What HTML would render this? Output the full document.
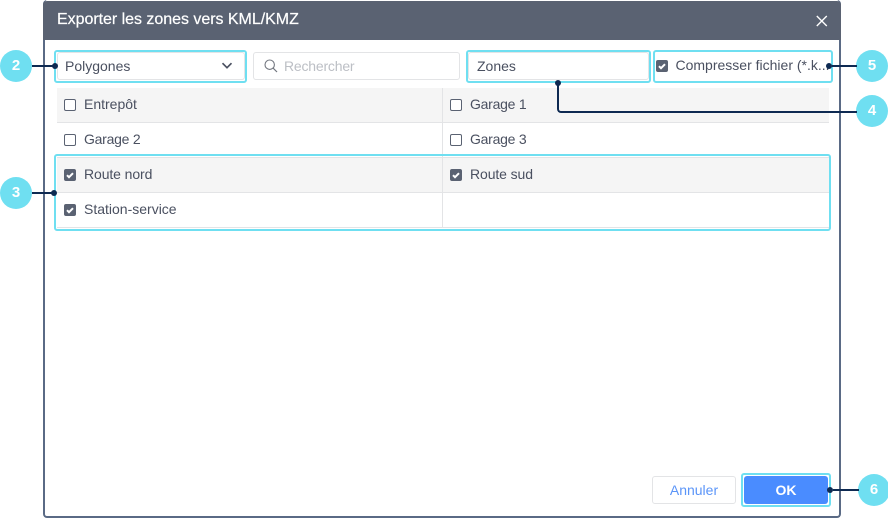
<!DOCTYPE html>
<html lang="fr">
<head>
<meta charset="utf-8">
<style>
html,body{margin:0;padding:0;background:#fff}
body{width:888px;height:518px;position:relative;overflow:hidden;font-family:"Liberation Sans",sans-serif;font-size:14px;color:#4a5060}
.a{position:absolute;box-sizing:border-box}
.t{position:absolute;white-space:nowrap;line-height:18px}
.g{letter-spacing:-.25px}
.hl{position:absolute;box-sizing:border-box;border:2px solid #6fdff1;border-radius:3px}
.in{position:absolute;box-sizing:border-box;border:1px solid #e3e4e6;border-radius:3px;background:#fff}
.num{position:absolute;width:32px;height:32px;border-radius:50%;background:#6fdff1;color:#fff;font-weight:700;font-size:15px;line-height:32px;text-align:center}
.dot{position:absolute;width:6px;height:6px;border-radius:50%;background:#0e2a52}
.ln{position:absolute;background:#0e2a52;height:2px}
.cb{position:absolute;box-sizing:border-box;width:12px;height:12px;border:1px solid #5a6272;border-radius:2px;background:#fff}
.cb.on{background:#5a6272}
.cb svg{position:absolute;left:-1px;top:-1px}
</style>
</head>
<body>
<!-- dialog -->
<div class="a" style="left:43px;top:0;width:798px;height:518px;border:2px solid #5a6a85;border-top:0;border-radius:4px;background:#fff"></div>
<div class="a" style="left:43px;top:1px;width:798px;height:39px;background:#5a6272;border-radius:4px 4px 0 0"></div>
<div class="t" style="left:57px;top:11px;font-size:16px;letter-spacing:-.03px;color:#fff;-webkit-text-stroke:.2px #fff">Exporter les zones vers KML/KMZ</div>
<svg class="a" style="left:815px;top:15px" width="13" height="12" viewBox="0 0 13 12"><path d="M1.8 1L11.8 11M11.8 1L1.8 11" stroke="#fff" stroke-width="1.4" fill="none"/></svg>

<!-- rows -->
<div class="a" style="left:57px;top:88px;width:772px;height:35px;background:#f5f5f5;border-bottom:1px solid #e3e4e6"></div>
<div class="a" style="left:57px;top:123px;width:772px;height:35px;border-bottom:1px solid #e3e4e6"></div>
<div class="a" style="left:57px;top:158px;width:772px;height:35px;background:#f5f5f5;border-bottom:1px solid #e3e4e6"></div>
<div class="a" style="left:57px;top:193px;width:772px;height:35px;border-bottom:1px solid #e3e4e6"></div>
<div class="a" style="left:442px;top:88px;width:1px;height:140px;background:#e3e4e6"></div>

<div class="cb" style="left:64px;top:99px"></div><div class="t" style="left:84px;top:95px">Entrepôt</div>
<div class="cb" style="left:450px;top:99px"></div><div class="t g" style="left:470px;top:95px">Garage 1</div>
<div class="cb" style="left:64px;top:134px"></div><div class="t g" style="left:84px;top:130px">Garage 2</div>
<div class="cb" style="left:450px;top:134px"></div><div class="t g" style="left:470px;top:130px">Garage 3</div>
<div class="cb on" style="left:64px;top:169px"><svg width="12" height="12" viewBox="0 0 12 12"><path d="M3 6.2L5 8.2L9 4.2" stroke="#fff" stroke-width="2" fill="none"/></svg></div><div class="t" style="left:84px;top:165px;letter-spacing:-.1px">Route nord</div>
<div class="cb on" style="left:450px;top:169px"><svg width="12" height="12" viewBox="0 0 12 12"><path d="M3 6.2L5 8.2L9 4.2" stroke="#fff" stroke-width="2" fill="none"/></svg></div><div class="t" style="left:470px;top:165px;letter-spacing:-.1px">Route sud</div>
<div class="cb on" style="left:64px;top:204px"><svg width="12" height="12" viewBox="0 0 12 12"><path d="M3 6.2L5 8.2L9 4.2" stroke="#fff" stroke-width="2" fill="none"/></svg></div><div class="t" style="left:84px;top:200px">Station-service</div>

<!-- toolbar -->
<div class="in" style="left:57px;top:52px;width:188px;height:28px"></div>
<div class="t" style="left:65px;top:57px">Polygones</div>
<svg class="a" style="left:221px;top:61px" width="12" height="9" viewBox="0 0 12 9"><path d="M1.5 2.2L6 6.7L10.5 2.2" stroke="#4a5060" stroke-width="1.7" fill="none"/></svg>

<div class="in" style="left:253px;top:52px;width:207px;height:28px"></div>
<svg class="a" style="left:264px;top:59px" width="14" height="14" viewBox="0 0 14 14"><circle cx="5.7" cy="5.7" r="4.7" stroke="#72767f" stroke-width="1.1" fill="none"/><path d="M9.2 9.2L13 13" stroke="#72767f" stroke-width="1.2" fill="none"/></svg>
<div class="t" style="left:284px;top:57px;color:#bcbfc5;letter-spacing:-.2px">Rechercher</div>

<div class="in" style="left:468px;top:52px;width:181px;height:28px"></div>
<div class="t" style="left:477px;top:57px">Zones</div>

<div class="cb on" style="left:656px;top:60px"><svg width="12" height="12" viewBox="0 0 12 12"><path d="M3 6.2L5 8.2L9 4.2" stroke="#fff" stroke-width="2" fill="none"/></svg></div>
<div class="t" style="left:675.5px;top:56px">Compresser fichier (*.k...</div>

<!-- buttons -->
<div class="in" style="left:652px;top:476px;width:84px;height:28px;text-align:center;line-height:26px;color:#5b95f8">Annuler</div>
<div class="a" style="left:744px;top:476px;width:84px;height:28px;background:#4a8cff;border-radius:3px;color:#fff;font-weight:700;text-align:center;line-height:28px">OK</div>

<!-- highlights -->
<div class="hl" style="left:54px;top:50px;width:193px;height:33px"></div>
<div class="hl" style="left:466px;top:50px;width:185px;height:33px"></div>
<div class="hl" style="left:653px;top:50px;width:180px;height:33px"></div>
<div class="hl" style="left:54px;top:154px;width:777px;height:77px"></div>
<div class="hl" style="left:741px;top:473px;width:90px;height:34px"></div>

<!-- callouts -->
<div class="num" style="left:0;top:50px">2</div>
<div class="ln" style="left:32px;top:65px;width:22px"></div>
<div class="dot" style="left:52px;top:63px"></div>

<div class="num" style="left:0;top:177px">3</div>
<div class="ln" style="left:32px;top:192px;width:22px"></div>
<div class="dot" style="left:51px;top:190px"></div>

<div class="num" style="left:856px;top:95px">4</div>
<div class="dot" style="left:555px;top:80px"></div>
<div class="a" style="left:557px;top:83px;width:300px;height:30px;border-left:2px solid #0e2a52;border-bottom:2px solid #0e2a52;border-bottom-left-radius:4px"></div>

<div class="num" style="left:856px;top:50px">5</div>
<div class="ln" style="left:832px;top:65px;width:25px"></div>
<div class="dot" style="left:826px;top:63px"></div>

<div class="num" style="left:858px;top:474px">6</div>
<div class="ln" style="left:833px;top:489px;width:26px"></div>
<div class="dot" style="left:827px;top:487px"></div>
</body>
</html>
